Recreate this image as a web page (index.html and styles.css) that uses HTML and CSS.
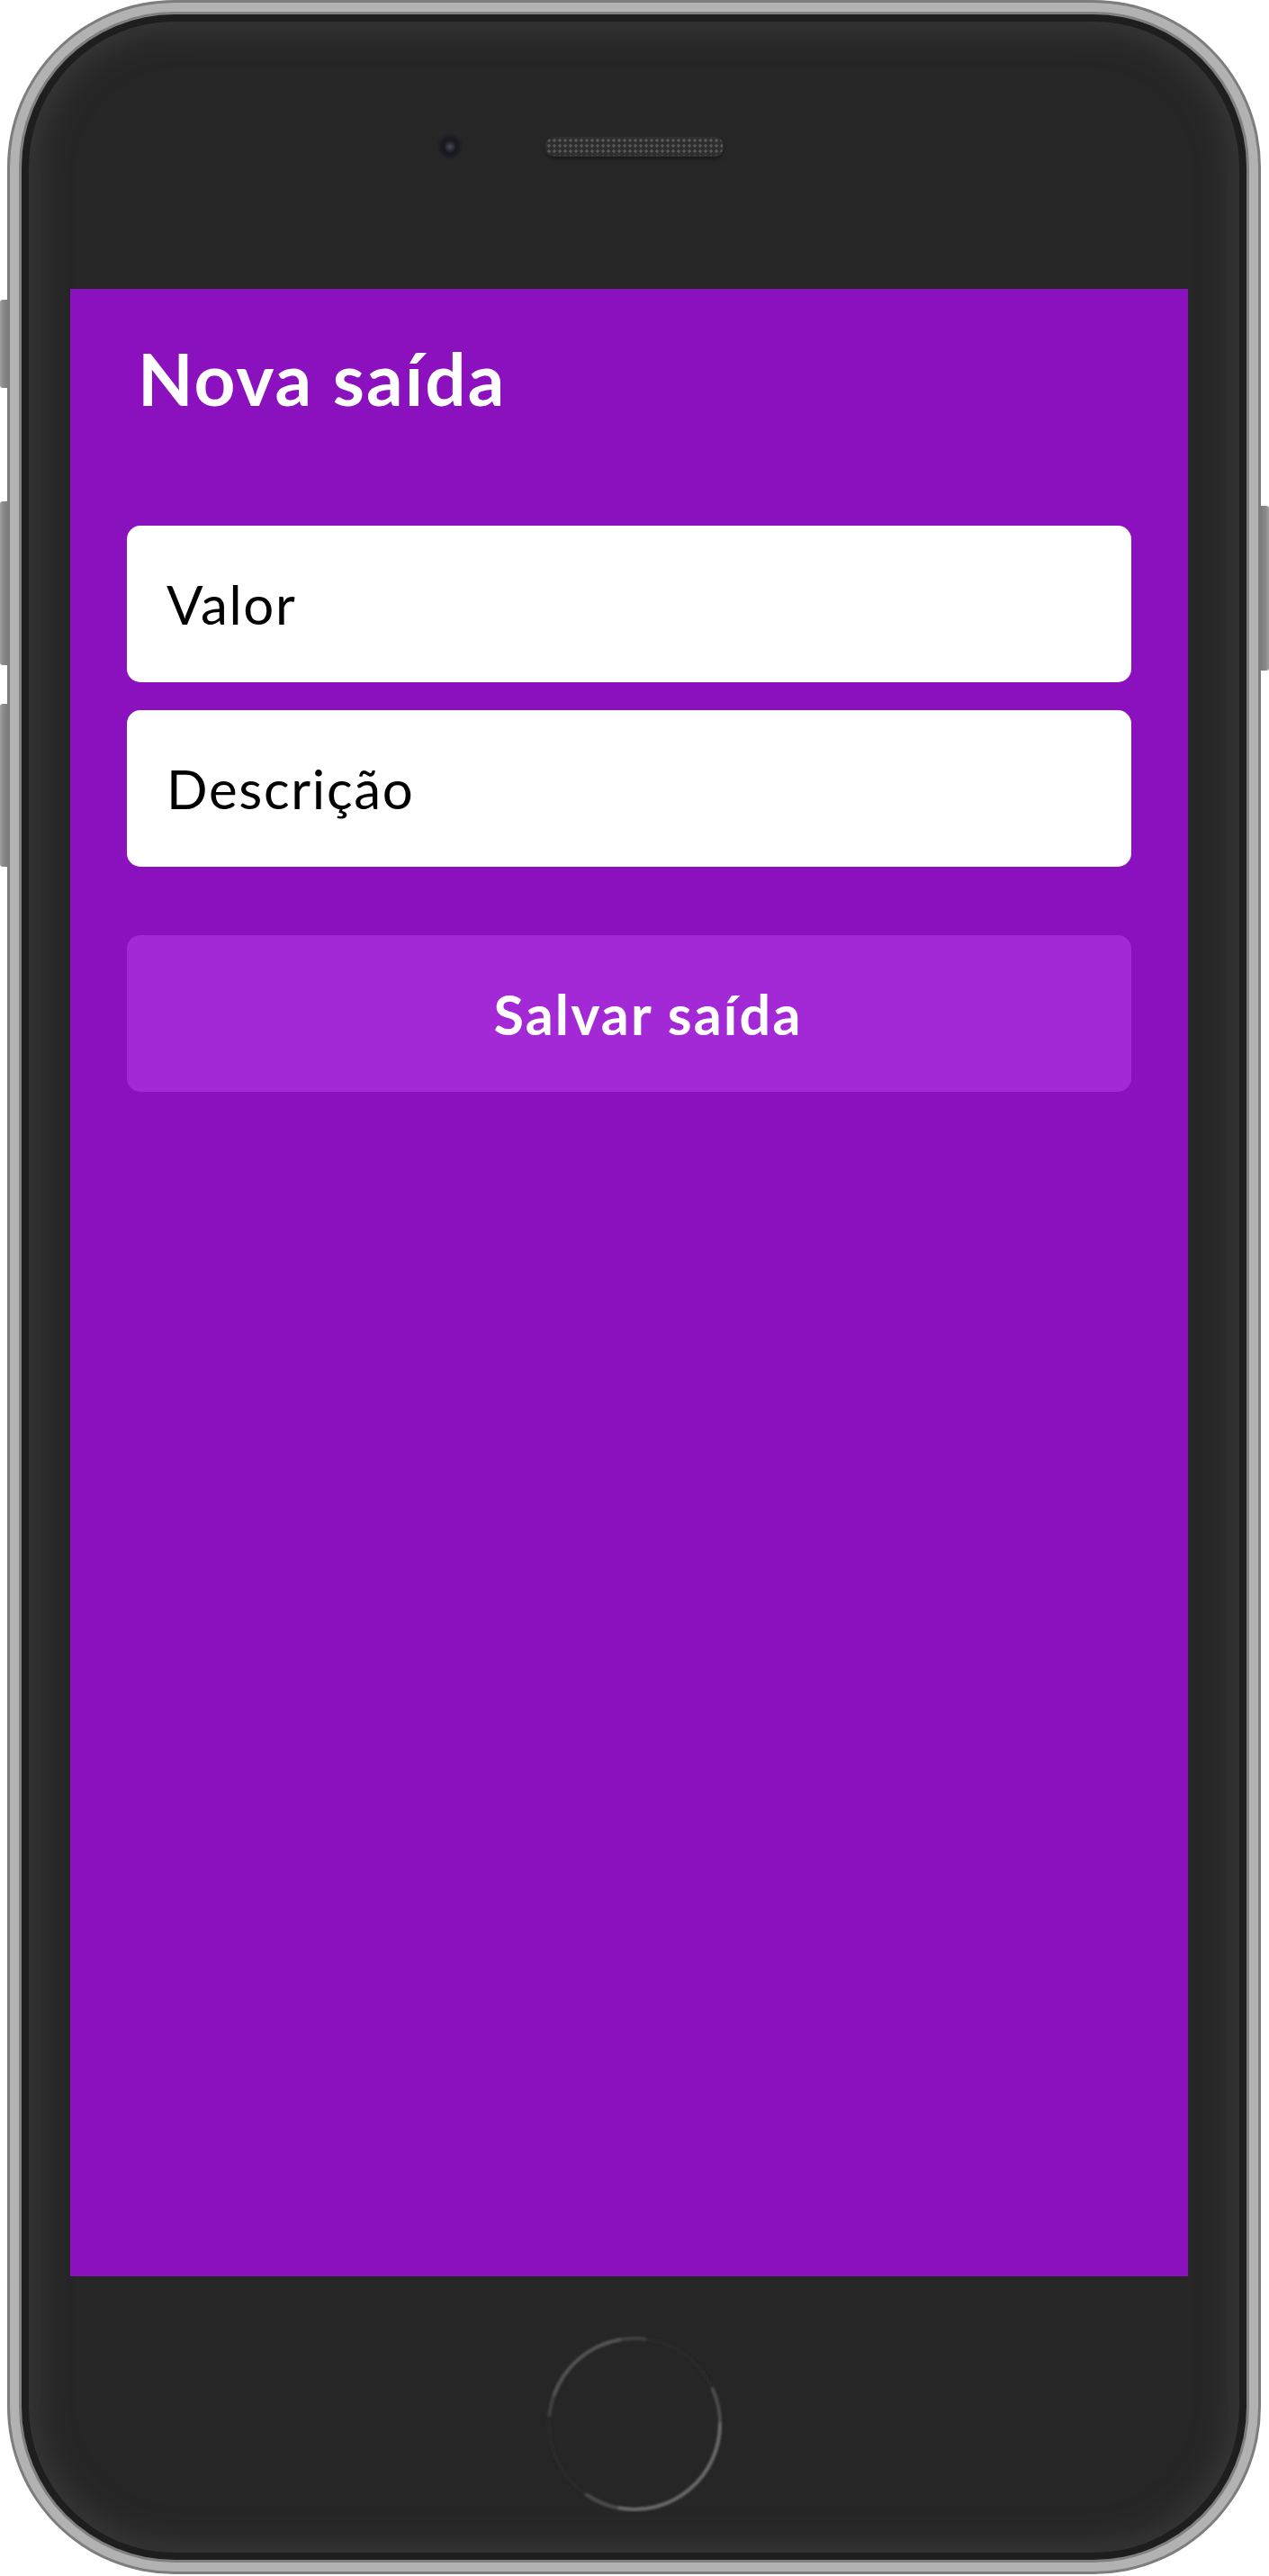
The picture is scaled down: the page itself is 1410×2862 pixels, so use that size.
FILE: index.html
```html
<!DOCTYPE html>
<html lang="pt-BR">
<head>
<meta charset="utf-8">
<title>Nova saída</title>
<link rel="stylesheet" href="styles.css">
</head>
<body>
<div class="device">
  <div class="side-btn side-left b1"></div>
  <div class="side-btn side-left b2"></div>
  <div class="side-btn side-left b3"></div>
  <div class="side-btn side-right b4"></div>
  <div class="rim">
    <div class="rim-light">
      <div class="rim-inner">
        <div class="bezel">
          <div class="face">
            <div class="face-top">
              <div class="camera"></div>
              <div class="speaker"></div>
              <div></div>
            </div>
            <main class="screen">
              <h1 class="title">Nova saída</h1>
              <form class="form">
                <input class="field" type="text" placeholder="Valor">
                <input class="field" type="text" placeholder="Descrição">
                <button class="save" type="button">Salvar saída</button>
              </form>
            </main>
            <div class="face-bottom">
              <svg class="home" width="196" height="196" viewBox="0 0 196 196">
                <defs>
                  <filter id="soft" x="-10%" y="-10%" width="120%" height="120%">
                    <feGaussianBlur stdDeviation="1.2"/>
                  </filter>
                </defs>
                <g fill="none" stroke-linecap="round" filter="url(#soft)">
                  <circle cx="98" cy="98" r="95" stroke="#292929" stroke-width="4"/>
                  <path d="M3.52 88.07 A95 95 0 0 1 109.58 3.71" stroke="#414141" stroke-width="4"/>
                  <path d="M8.73 65.51 A95 95 0 0 1 81.5 4.44" stroke="#525252" stroke-width="4"/>
                  <path d="M184.78 59.36 A95 95 0 0 1 44.88 176.76" stroke="#4c4c4c" stroke-width="4"/>
                  <path d="M193 98 A95 95 0 0 1 81.5 191.56" stroke="#676767" stroke-width="4"/>
                </g>
              </svg>
            </div>
          </div>
        </div>
      </div>
    </div>
  </div>
</div>
</body>
</html>
```

FILE: styles.css
```css
* { box-sizing: border-box; }
html, body { margin: 0; padding: 0; background: #ffffff; }
body { width: 1410px; height: 2862px; overflow: hidden; font-family: "Lato", "Noto Sans", sans-serif; }

.device { position: relative; width: 1410px; height: 2862px; }

.side-btn { position: absolute; width: 9px; background: linear-gradient(to right, #a0a0a0, #8a8a8a 40%, #7c7c7c); }
.side-left { left: 0; border-radius: 3px 0 0 3px; }
.side-right { right: 0; border-radius: 0 3px 3px 0; background: linear-gradient(to left, #a0a0a0, #8a8a8a 40%, #7c7c7c); }
.b1 { top: 333px; height: 98px; }
.b2 { top: 557px; height: 182px; }
.b3 { top: 782px; height: 181px; }
.b4 { top: 562px; height: 183px; }

.rim { margin-left: 8px; width: 1393px; height: 2860px; padding: 3px; border-radius: 186px; background: #7d7d7d; }
.rim-light { height: 100%; padding: 10px; border-radius: 183px; background: #b2b2b2; }
.rim-inner { height: 100%; padding: 3px; border-radius: 173px; background: #808080; }
.bezel { height: 100%; padding: 8px; border-radius: 170px; background: #1e1e1e; }
.face {
  height: 100%;
  border-radius: 162px;
  background: #262626;
  box-shadow: inset 0 0 36px 8px rgba(72, 72, 72, 0.55);
  padding: 0 57px 0 46px;
  display: flex;
  flex-direction: column;
}

.face-top {
  height: 297px; padding-top: 124px;
  display: grid; grid-template-columns: 1fr 196px 1fr;
  align-items: center; align-content: start;
  margin-left: -46px; margin-right: -57px;
}
.camera {
  justify-self: end;
  width: 30px; height: 30px; margin-right: 92px;
  border-radius: 50%;
  background: radial-gradient(circle at 50% 50%, #4a4a5a 0, #34343f 3px, #18181f 7px, #1a1a20 10px, #222226 13px, #262626 15px);
}
.speaker {
  width: 196px; height: 20px;
  border-radius: 8px;
  background-color: #2e2e2e;
  background-image: radial-gradient(circle, #575757 1.4px, rgba(0,0,0,0) 2px);
  background-size: 6px 6px;
  box-shadow: 0 0 0 1px #303030, 0 3px 4px rgba(0,0,0,0.4);
}

.screen {
  width: 1242px; height: 2208px;
  flex: none;
  background: #8C11BE;
  padding: 0 63px;
}
.title {
  margin: 52px 0 0 0;
  padding-left: 12px;
  font-family: "Lato", "Noto Sans", sans-serif;
  font-weight: 700;
  font-size: 80px;
  letter-spacing: 2.1px;
  line-height: 94px;
  color: #ffffff;
}
.form { margin-top: 117px; display: flex; flex-direction: column; }
.field {
  height: 174px; width: 100%;
  margin: 0 0 31px 0;
  border: none; outline: none;
  border-radius: 15px;
  background: #ffffff;
  padding: 0 0 0 44px;
  font-family: "Lato", "Noto Sans", sans-serif;
  font-size: 60px;
  letter-spacing: 1.7px;
  color: #000000;
}
.field::placeholder { color: #000000; opacity: 1; }
.save {
  margin-top: 45px;
  height: 174px; width: 100%;
  border: none; border-radius: 15px;
  background: #A328D6;
  color: #ffffff;
  padding: 0 0 0 42px;
  font-family: "Lato", "Noto Sans", sans-serif;
  font-weight: 700;
  font-size: 61px;
  letter-spacing: 2.2px;
}

.face-bottom { flex: 1; display: flex; justify-content: center; align-items: flex-start; padding-top: 66px; margin-left: -46px; margin-right: -57px; }
.home { display: block; }
```
